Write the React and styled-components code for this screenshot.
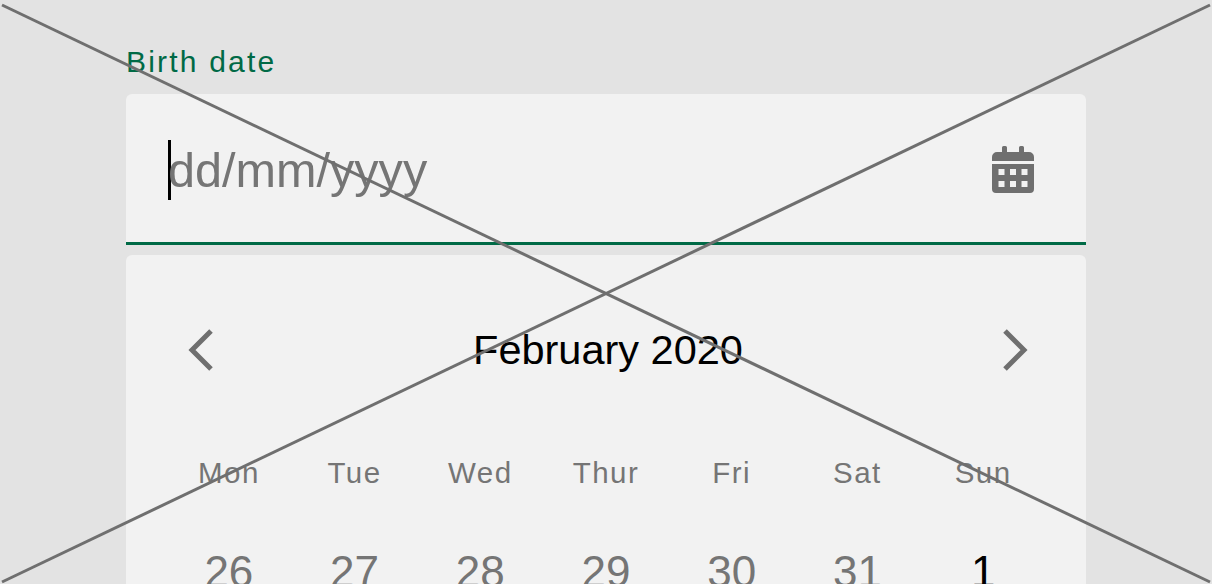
import React from "react";
import styled, { createGlobalStyle } from "styled-components";

const Global = createGlobalStyle`
  html, body { margin: 0; padding: 0; background: #e3e3e3; }
  body { width: 1212px; height: 584px; overflow: hidden; }
`;

const Page = styled.div`
  position: relative;
  width: 1212px;
  height: 584px;
  overflow: hidden;
  box-sizing: border-box;
  padding: 42px 126px 0;
  background: #e3e3e3;
  font-family: "Liberation Sans", Arial, sans-serif;
`;

const Label = styled.div`
  height: 52px;
  font-size: 30px;
  line-height: 40px;
  letter-spacing: 2.2px;
  color: #006a46;
`;

const Field = styled.div`
  display: flex;
  align-items: center;
  justify-content: space-between;
  box-sizing: border-box;
  height: 151px;
  padding: 4px 52px 0 42px;
  background: #f2f2f2;
  border-radius: 6px 6px 0 0;
  border-bottom: 3px solid #006a46;
`;

const InputText = styled.div`
  display: flex;
  align-items: center;
  font-size: 48.6px;
  line-height: 60px;
  color: #757575;
`;

const Caret = styled.span`
  width: 3px;
  height: 60px;
  margin-right: -3px;
  background: #000;
`;

const Calendar = styled.div`
  margin-top: 10px;
  padding: 59px 40px 0;
  background: #f2f2f2;
  border-radius: 6px 6px 0 0;
  height: 400px;
`;

const Header = styled.div`
  display: flex;
  align-items: center;
  justify-content: space-between;
  height: 72px;
  padding: 0 18px 0 22px;
`;

const Title = styled.div`
  font-size: 41.5px;
  line-height: 74px;
  color: #000;
`;

const Grid = styled.div`
  display: grid;
  grid-template-columns: repeat(7, 1fr);
  margin-top: 67px;
  row-gap: 55px;
`;

const DayName = styled.div`
  text-align: center;
  font-size: 29.5px;
  line-height: 40px;
  letter-spacing: 1.5px;
  color: #757575;
`;

const DateCell = styled.div`
  text-align: center;
  font-size: 44px;
  line-height: 48px;
  color: ${(p) => (p.$current ? "#000" : "#757575")};
`;

const Cross = styled.svg`
  position: absolute;
  inset: 0;
  width: 1212px;
  height: 584px;
  pointer-events: none;
`;

const CalendarIcon = () => (
  <svg width="42" height="48" viewBox="0 0 42 48">
    <path
      fill="#6f6f6f"
      d="M10 1.500A1.500 1.500 0 0 1 11.500 0h2A1.500 1.500 0 0 1 15 1.500V6h12V1.500A1.500 1.500 0 0 1 28.500 0h2A1.500 1.500 0 0 1 32 1.500V6h5a5 5 0 0 1 5 5v4H0v-4a5 5 0 0 1 5-5h5z"
    />
    <path
      fill="#6f6f6f"
      fillRule="evenodd"
      d="M0 18h42v25a4 4 0 0 1-4 4H4a4 4 0 0 1-4-4zM6.500 23v6h6v-6zM18 23v6h6v-6zM29.500 23v6h6v-6zM6.500 35v6h6v-6zM18 35v6h6v-6zM29.500 35v6h6v-6z"
    />
  </svg>
);

const Chevron = ({ dir }) => (
  <svg width="26" height="42" viewBox="0 0 26 42">
    <path
      fill="none"
      stroke="#6f6f6f"
      strokeWidth="5"
      d={dir === "left" ? "M23 2 4 21l19 19" : "M3 2l19 19L3 40"}
    />
  </svg>
);

const days = ["Mon", "Tue", "Wed", "Thur", "Fri", "Sat", "Sun"];
const dates = [
  { n: 26 },
  { n: 27 },
  { n: 28 },
  { n: 29 },
  { n: 30 },
  { n: 31 },
  { n: 1, current: true },
];

export default function App() {
  return (
    <Page>
      <Global />
      <Label>Birth date</Label>
      <Field>
        <InputText>
          <Caret />
          dd/mm/yyyy
        </InputText>
        <CalendarIcon />
      </Field>
      <Calendar>
        <Header>
          <Chevron dir="left" />
          <Title>February 2020</Title>
          <Chevron dir="right" />
        </Header>
        <Grid>
          {days.map((d) => (
            <DayName key={d}>{d}</DayName>
          ))}
          {dates.map((d) => (
            <DateCell key={d.n} $current={d.current}>
              {d.n}
            </DateCell>
          ))}
        </Grid>
      </Calendar>
      <Cross viewBox="0 0 1212 584">
        <line x1="2" y1="5" x2="1210" y2="582" stroke="#6f6f6f" strokeWidth="3" />
        <line x1="2" y1="582" x2="1210" y2="5" stroke="#6f6f6f" strokeWidth="3" />
      </Cross>
    </Page>
  );
}
